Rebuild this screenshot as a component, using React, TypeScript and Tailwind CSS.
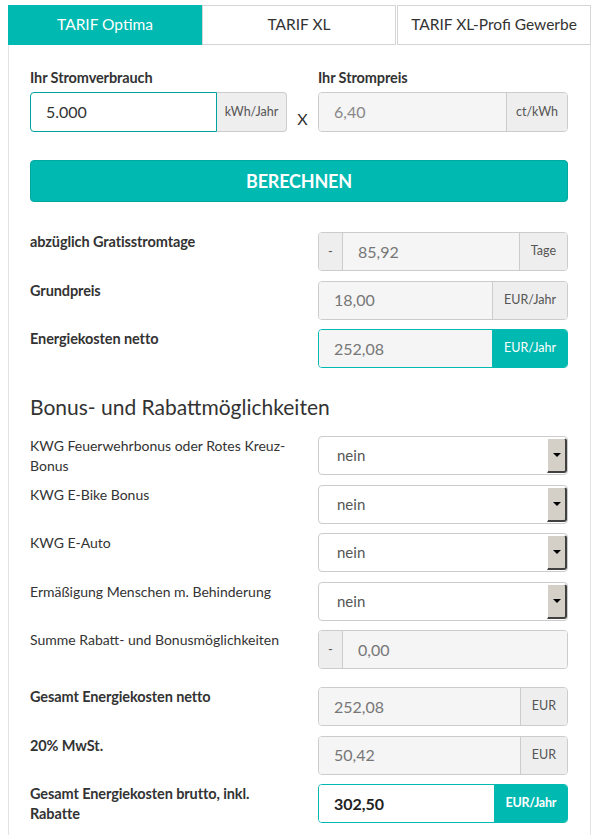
const teal = "bg-[#00b9b1]";

function Label({ children, bold = true }: { children: React.ReactNode; bold?: boolean }) {
  return (
    <div className={`pr-2 leading-[20px] text-[#333] ${bold ? "text-[14.5px] font-bold tracking-[-0.1px]" : "text-[14px]"}`}>
      {children}
    </div>
  );
}

function Addon({ children, accent }: { children: React.ReactNode; accent?: "teal" | "tealBold" }) {
  const base = "flex items-center justify-center px-[11px] text-[12.5px] border-l";
  if (accent)
    return (
      <div className={`${base} ${teal} border-[#00b9b1] text-white ${accent === "tealBold" ? "font-bold tracking-[-0.3px]" : ""}`}>
        {children}
      </div>
    );
  return <div className={`${base} bg-[#eeeeee] border-[#cccccc] text-[#555]`}>{children}</div>;
}

function Field({
  value,
  suffix,
  prefix,
  accent,
  bold,
}: {
  value: string;
  suffix?: string;
  prefix?: boolean;
  accent?: "teal" | "tealBold";
  bold?: boolean;
}) {
  return (
    <div
      className={`flex h-[39px] overflow-hidden rounded-[4px] border ${
        accent ? "border-[#00b9b1]" : "border-[#cccccc]"
      }`}
    >
      {prefix && (
        <div className="flex w-[24px] items-center justify-center border-r border-[#cccccc] bg-[#eeeeee] text-[13px] text-[#555]">
          -
        </div>
      )}
      <div
        className={`flex flex-1 items-center px-[15px] text-[16px] ${
          bold ? "bg-white font-bold text-[#222]" : "bg-[#f5f5f5] text-[#777]"
        }`}
      >
        {value}
      </div>
      {suffix && <Addon accent={accent}>{suffix}</Addon>}
    </div>
  );
}

function Select() {
  return (
    <div className="flex h-[39px] overflow-hidden rounded-[4px] border border-[#cccccc] bg-white">
      <div className="flex flex-1 items-center pl-[18px] text-[15px] text-[#555]">nein</div>
      <div className="my-[1px] flex w-[20px] items-center justify-center rounded-r-[3px] border-t border-l border-white border-r-2 border-b-2 border-r-[#404040] border-b-[#404040] bg-[#d4d0c8]">
        <svg width="8" height="4" viewBox="0 0 8 4">
          <path d="M0 0h8L4 4z" fill="#000" />
        </svg>
      </div>
    </div>
  );
}

function Row({ label, bold = true, children, className = "" }: { label: React.ReactNode; bold?: boolean; children: React.ReactNode; className?: string }) {
  return (
    <div className={`grid h-[39px] grid-cols-[288px_250px] ${className}`}>
      <Label bold={bold}>{label}</Label>
      {children}
    </div>
  );
}

export default function App() {
  return (
    <div className="min-h-[835px] bg-white pt-[5px] pl-[8px]" style={{ fontFamily: "Lato, 'Noto Sans', sans-serif" }}>
      <div className="w-[583px]">
        {/* Tabs */}
        <div className="flex h-[40px] text-[15.5px]">
          <div className={`flex w-[194px] items-center justify-center ${teal} text-white`}>TARIF Optima</div>
          <div className="flex w-[194px] items-center justify-center border border-[#d5d5d5] text-[#333]">TARIF XL</div>
          <div className="ml-[1px] flex flex-1 items-center justify-center border border-[#d5d5d5] text-[#333]">
            TARIF XL-Profi Gewerbe
          </div>
        </div>

        {/* Panel */}
        <div className="border border-t-0 border-[#e3e3e3] px-[21px] pt-[23px] pb-[12px]">
          <div className="flex items-end">
            <div className="w-[257px]">
              <div className="mb-[4px] text-[14.5px] font-bold leading-[20px] tracking-[-0.1px] text-[#333]">Ihr Stromverbrauch</div>
              <div className="flex h-[40px] rounded-[4px]">
                <div className="flex w-[187px] items-center rounded-l-[4px] border border-[#00a39b] bg-white px-[15px] text-[16px] text-[#333]">
                  5.000
                </div>
                <div className="flex flex-1 items-center justify-center rounded-r-[4px] border border-l-0 border-[#cccccc] bg-[#eeeeee] text-[12.5px] text-[#555]">
                  kWh/Jahr
                </div>
              </div>
            </div>
            <div className="flex w-[31px] justify-center pb-[1px] text-[16px] text-[#333]">X</div>
            <div className="w-[250px]">
              <div className="mb-[4px] text-[14.5px] font-bold leading-[20px] tracking-[-0.1px] text-[#333]">Ihr Strompreis</div>
              <div className="flex h-[40px] overflow-hidden rounded-[4px] border border-[#cccccc]">
                <div className="flex w-[187px] items-center bg-[#f5f5f5] px-[15px] text-[16px] text-[#888]">6,40</div>
                <div className="flex flex-1 items-center justify-center border-l border-[#cccccc] bg-[#eeeeee] text-[12.5px] text-[#555]">
                  ct/kWh
                </div>
              </div>
            </div>
          </div>

          <button className={`mt-[28px] flex h-[42px] w-[538px] items-center justify-center rounded-[4px] border border-[#00a8a0] ${teal} text-[18px] font-bold tracking-[-0.2px] text-white`}>
            BERECHNEN
          </button>

          <div className="mt-[30px] flex flex-col gap-[9.5px]">
            <Row label="abzüglich Gratisstromtage">
              <Field prefix value="85,92" suffix="Tage" />
            </Row>
            <Row label="Grundpreis">
              <Field value="18,00" suffix="EUR/Jahr" />
            </Row>
            <Row label="Energiekosten netto">
              <Field value="252,08" suffix="EUR/Jahr" accent="teal" />
            </Row>
          </div>

          <h2 className="mt-[25px] mb-[15px] text-[21px] leading-[28px] text-[#333]">Bonus- und Rabattmöglichkeiten</h2>

          <div className="flex flex-col gap-[9.5px]">
            <Row bold={false} label={<>KWG Feuerwehrbonus oder Rotes Kreuz-<br />Bonus</>}>
              <Select />
            </Row>
            <Row bold={false} label="KWG E-Bike Bonus">
              <Select />
            </Row>
            <Row bold={false} label="KWG E-Auto">
              <Select />
            </Row>
            <Row bold={false} label="Ermäßigung Menschen m. Behinderung">
              <Select />
            </Row>
            <Row bold={false} label="Summe Rabatt- und Bonusmöglichkeiten">
              <Field prefix value="0,00" />
            </Row>
            <Row label="Gesamt Energiekosten netto" className="mt-[8.5px]">
              <Field value="252,08" suffix="EUR" />
            </Row>
            <Row label="20% MwSt.">
              <Field value="50,42" suffix="EUR" />
            </Row>
            <Row label={<>Gesamt Energiekosten brutto, inkl.<br />Rabatte</>}>
              <Field value="302,50" suffix="EUR/Jahr" accent="tealBold" bold />
            </Row>
          </div>
        </div>
      </div>
    </div>
  );
}
